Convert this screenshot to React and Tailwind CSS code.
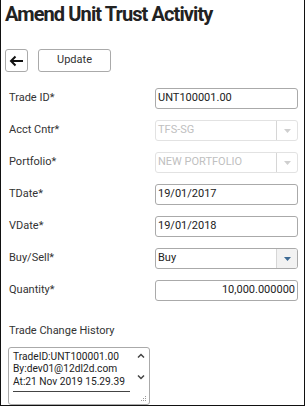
import React from "react";

const Arrow = ({ color = "#b0b0b0", bg = "" }) => (
  <div className={`flex w-[21px] items-center justify-center self-stretch border-l border-[#d6d6d6] ${bg}`}>
    <svg width="7" height="4" viewBox="0 0 7 4"><path d="M0 0h7L3.5 4z" fill={color} /></svg>
  </div>
);

const Row = ({ label, children }) => (
  <div className="flex h-[21px] items-center">
    <div className="w-[154px] pl-[8px] text-[11px] text-[#333]">{label}</div>
    {children}
  </div>
);

export default function App() {
  return (
    <div className="h-[406px] w-[305px] border-x border-b border-[#111] bg-white" style={{ fontFamily: "Roboto, 'Liberation Sans', Arial, sans-serif" }}>
      <div className="pl-[4px] pt-[1px] text-[20px] font-bold leading-[26px] tracking-[-0.9px] text-[#222]">Amend Unit Trust Activity</div>
      <div className="mt-[22px] flex gap-[10px] pl-[4px]">
        <button className="flex h-[23px] w-[23px] items-center justify-center rounded-[3px] border border-[#aaa] bg-white">
          <svg width="15" height="12" viewBox="0 0 15 12"><path d="M14 6H2M6.5 1.5L2 6l4.5 4.5" stroke="#111" strokeWidth="2" fill="none" /></svg>
        </button>
        <button className="h-[23px] w-[73px] rounded-[3px] border border-[#aaa] bg-white text-[11px] text-[#333]">Update</button>
      </div>
      <div className="mt-[16px] flex flex-col gap-[11px]">
        <Row label="Trade ID*">
          <div className="flex h-[21px] w-[143px] items-center rounded-[3px] border border-[#aaa] pl-[2px] text-[11px] text-[#222]">UNT100001.00</div>
        </Row>
        <Row label="Acct Cntr*">
          <div className="flex h-[21px] w-[143px] items-center rounded-[3px] border border-[#e2e2e2] text-[11px] text-[#c0c0c0]">
            <span className="flex-1 pl-[2px]">TFS-SG</span>
            <Arrow color="#cfcfcf" />
          </div>
        </Row>
        <Row label="Portfolio*">
          <div className="flex h-[21px] w-[143px] items-center rounded-[3px] border border-[#e2e2e2] text-[11px] text-[#c0c0c0]">
            <span className="flex-1 pl-[2px]">NEW PORTFOLIO</span>
            <Arrow color="#cfcfcf" />
          </div>
        </Row>
        <Row label="TDate*">
          <div className="flex h-[21px] w-[143px] items-center rounded-[3px] border border-[#aaa] pl-[2px] text-[11px] text-[#222]">19/01/2017</div>
        </Row>
        <Row label="VDate*">
          <div className="flex h-[21px] w-[143px] items-center rounded-[3px] border border-[#aaa] pl-[2px] text-[11px] text-[#222]">19/01/2018</div>
        </Row>
        <Row label="Buy/Sell*">
          <div className="flex h-[21px] w-[143px] items-center overflow-hidden rounded-[3px] border border-[#aaa] text-[11px] text-[#222]">
            <span className="flex-1 pl-[2px]">Buy</span>
            <Arrow color="#3d6a94" bg="bg-[#f2f2f2]" />
          </div>
        </Row>
        <Row label="Quantity*">
          <div className="flex h-[21px] w-[143px] items-center justify-end rounded-[3px] border border-[#aaa] pr-[2px] text-[11px] text-[#222]">10,000.000000</div>
        </Row>
      </div>
      <div className="mt-[22px] pl-[8px] text-[11px] text-[#333]">Trade Change History</div>
      <div className="relative ml-[7px] mt-[7px] flex h-[58px] w-[142px] rounded-[3px] border border-[#aaa]">
        <div className="flex-1 pl-[4px] pt-[3px] text-[10.2px] leading-[12.5px] text-[#222]">
          <div className="whitespace-nowrap">TradeID:UNT100001.00</div>
          <div className="whitespace-nowrap">By:dev01@12dl2d.com</div>
          <div className="whitespace-nowrap">At:21 Nov 2019 15.29.39</div>
          <div className="mt-[3px] w-[117px] border-t border-[#444]" />
        </div>
        <div className="flex w-[17px] flex-col items-center pt-[5px]">
          <svg width="8" height="5" viewBox="0 0 8 5"><path d="M1 4.5L4 1.5l3 3" stroke="#444" strokeWidth="1.5" fill="none" /></svg>
          <svg className="mt-[17px]" width="8" height="5" viewBox="0 0 8 5"><path d="M1 0.5L4 3.5l3-3" stroke="#444" strokeWidth="1.5" fill="none" /></svg>
        </div>
        <svg className="absolute bottom-[2px] right-[2px]" width="7" height="7" viewBox="0 0 7 7">
          <rect x="5" y="1" width="1" height="1" fill="#999" />
          <rect x="3" y="3" width="1" height="1" fill="#999" />
          <rect x="5" y="3" width="1" height="1" fill="#999" />
          <rect x="1" y="5" width="1" height="1" fill="#999" />
          <rect x="3" y="5" width="1" height="1" fill="#999" />
          <rect x="5" y="5" width="1" height="1" fill="#999" />
        </svg>
      </div>
    </div>
  );
}
